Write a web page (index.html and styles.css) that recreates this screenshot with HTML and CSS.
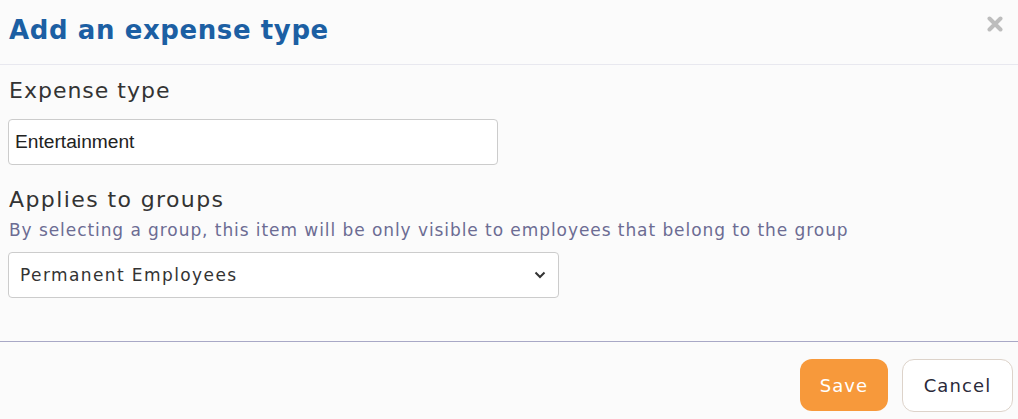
FILE: index.html
```html
<!DOCTYPE html>
<html>
<head>
<meta charset="utf-8">
<link rel="stylesheet" href="styles.css">
</head>
<body>
<div class="modal">
  <div class="header">
    <h1 class="title">Add an expense type</h1>
    <svg class="close" width="16" height="16" viewBox="0 0 16 16"><path d="M2.5 2.5 L13.5 13.5 M13.5 2.5 L2.5 13.5" stroke="#bdbdbd" stroke-width="4" stroke-linecap="round"/></svg>
  </div>
  <div class="body">
    <label class="label">Expense type</label>
    <div class="input">Entertainment</div>
    <label class="label label2">Applies to groups</label>
    <div class="hint">By selecting a group, this item will be only visible to employees that belong to the group</div>
    <div class="select">
      <span>Permanent Employees</span>
      <svg class="chev" width="12" height="8" viewBox="0 0 12 8"><path d="M1.5 1.5 L6 6 L10.5 1.5" fill="none" stroke="#333" stroke-width="2"/></svg>
    </div>
  </div>
  <div class="footer">
    <button class="btn save">Save</button>
    <button class="btn cancel">Cancel</button>
  </div>
</div>
</body>
</html>
```
FILE: styles.css
```css
html, body { margin: 0; padding: 0; background: #fbfbfb; }
body { font-family: "DejaVu Sans", sans-serif; color: #333; width: 1018px; height: 419px; overflow: hidden; }
.modal { display: flex; flex-direction: column; height: 419px; }
.header { height: 65px; box-sizing: border-box; border-bottom: 1px solid #e8e8ef; display: flex; align-items: center; justify-content: space-between; padding: 0 15px 4px 9px; }
.title { margin: 0; font-size: 26px; font-weight: 700; color: #1c5fa3; letter-spacing: 0.6px; }
.close { display: block; margin-top: -12px; }
.body { padding: 11px 8px 0 8px; height: 277px; box-sizing: border-box; border-bottom: 1px solid #a8a8c6; }
.label { display: block; font-size: 22px; color: #333; line-height: 30px; margin-left: 1px; letter-spacing: 1px; }
.input { margin-top: 13px; width: 490px; height: 46px; box-sizing: border-box; border: 1px solid #cccccc; border-radius: 4px; background: #fff; font-family: "Liberation Sans", Arial, sans-serif; font-size: 19.2px; color: #222; padding: 0 6px; display: flex; align-items: center; }
.label2 { margin-top: 20px; letter-spacing: 1.4px; }
.hint { font-size: 17px; color: #6c6c93; margin-top: 3px; margin-left: 1px; line-height: 24px; letter-spacing: 0.93px; white-space: nowrap; }
.select { margin-top: 10px; width: 551px; height: 46px; box-sizing: border-box; border: 1px solid #cccccc; border-radius: 4px; background: #fff; display: flex; align-items: center; justify-content: space-between; padding: 0 12px 0 11px; font-size: 17px; color: #333; letter-spacing: 1.4px; }
.chev { display: block; }
.footer { display: flex; justify-content: flex-end; align-items: flex-start; gap: 14px; padding: 17px 5px 0 0; }
.btn { font-family: "DejaVu Sans", sans-serif; font-size: 18px; border-radius: 12px; cursor: pointer; letter-spacing: 1.1px; padding: 0; }
.save { width: 88px; height: 52px; background: #f7993b; border: none; color: #fff; }
.cancel { width: 111px; height: 53px; background: #fff; border: 1px solid #ddd3ca; color: #2a2a3a; }
```
